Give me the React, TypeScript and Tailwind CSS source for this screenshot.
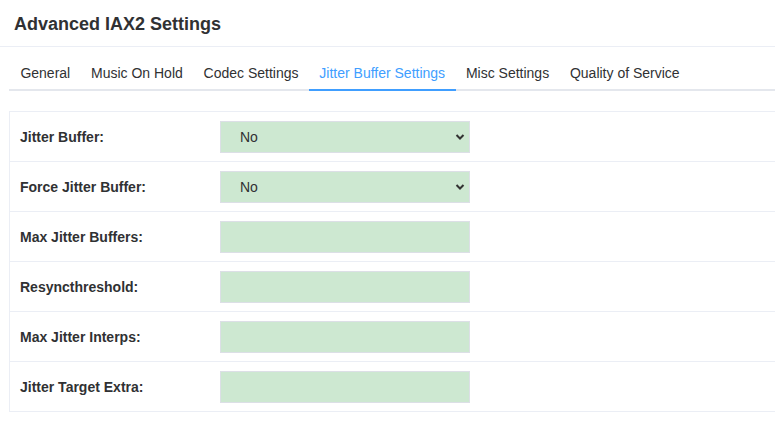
const tabs = ['General', 'Music On Hold', 'Codec Settings', 'Jitter Buffer Settings', 'Misc Settings', 'Quality of Service'];

const rows: { label: string; select?: boolean }[] = [
  { label: 'Jitter Buffer:', select: true },
  { label: 'Force Jitter Buffer:', select: true },
  { label: 'Max Jitter Buffers:' },
  { label: 'Resyncthreshold:' },
  { label: 'Max Jitter Interps:' },
  { label: 'Jitter Target Extra:' },
];

function Chevron() {
  return (
    <svg width="10" height="7" viewBox="0 0 10 7" className="absolute right-[4px] top-1/2 -translate-y-1/2">
      <path d="M1.5 1.5 L5 5 L8.5 1.5" fill="none" stroke="#333" strokeWidth="2" />
    </svg>
  );
}

export default function App() {
  return (
    <div className="w-[775px] h-[435px] overflow-hidden bg-white text-[#303133]" style={{ fontFamily: '"Liberation Sans", Arial, sans-serif' }}>
      <div className="h-[47px] border-b border-[#ebeef5] flex items-center pl-[14px]">
        <h1 className="text-[18px] font-bold leading-none pt-[1px]">Advanced IAX2 Settings</h1>
      </div>

      <div className="mt-[11px] ml-[9px] flex border-b-2 border-[#e4e7ed]">
        {tabs.map((t, i) => (
          <div
            key={t}
            className={
              'h-[33px] px-[10.4px] flex items-center text-[14px] -mb-[2px] border-b-2 ' +
              (i === 0 ? 'ml-[1px] ' : '') +
              (t === 'Jitter Buffer Settings' ? 'text-[#409eff] border-[#409eff]' : 'border-transparent')
            }
          >
            {t}
          </div>
        ))}
      </div>

      <div className="mt-[20px] ml-[9px] border-t border-l border-[#ebeef5]">
        {rows.map((r) => (
          <div key={r.label} className="h-[50px] border-b border-[#ebeef5] flex items-center">
            <div className="w-[210px] pl-[10px] pt-[2px] text-[14px] font-bold">{r.label}</div>
            <div className="relative w-[250px] h-[32px] bg-[#cde8d1] border border-[#dcdfe6] flex items-center pl-[19px] pt-[2px] text-[14px]">
              {r.select && (
                <>
                  <span>No</span>
                  <Chevron />
                </>
              )}
            </div>
          </div>
        ))}
      </div>
    </div>
  );
}
